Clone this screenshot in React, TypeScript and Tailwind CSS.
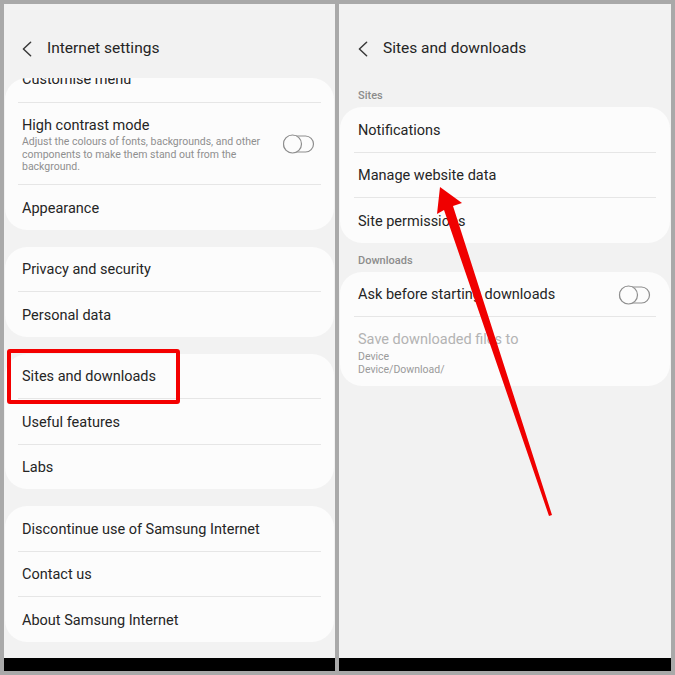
import React from "react";

const font = { fontFamily: "Roboto, 'Noto Sans', sans-serif" };

function Chevron() {
  return (
    <svg width="10" height="16" viewBox="0 0 10 16" className="shrink-0">
      <path d="M8.6 1.2 L1.4 8 L8.6 14.8" fill="none" stroke="#3a3a3a" strokeWidth="1.5" strokeLinecap="round" strokeLinejoin="round" />
    </svg>
  );
}

function Toggle() {
  return (
    <svg width="33" height="20" viewBox="0 0 33 20" className="shrink-0">
      <rect x="1.5" y="2" width="30" height="16" rx="8" fill="none" stroke="#8e8e8e" strokeWidth="1.2" />
      <circle cx="10.5" cy="10" r="9" fill="#fcfcfc" stroke="#8e8e8e" strokeWidth="1.2" />
    </svg>
  );
}

function Divider({ inset }: { inset: string }) {
  return <div className={`h-px bg-[#e6e6e6] ${inset}`} />;
}

function Row({ label, pl }: { label: string; pl: string }) {
  return (
    <div className={`h-[44.5px] pt-[3px] flex items-center ${pl} text-[14.5px] text-[#252525]`}>{label}</div>
  );
}

function Header({ title, pl }: { title: string; pl: string }) {
  return (
    <div className={`h-[74px] pt-[16px] flex items-center ${pl} gap-[15px]`}>
      <Chevron />
      <span className="text-[15.5px] text-[#252525]">{title}</span>
    </div>
  );
}

export default function App() {
  return (
    <div className="relative w-[675px] h-[675px] bg-[#a9a9a9] pt-[4px] px-[4px] flex gap-[4px]" style={font}>
      {/* Left panel */}
      <div className="w-[331px] h-[667px] bg-[#f2f2f2] flex flex-col">
        <Header title="Internet settings" pl="pl-[18px]" />
        <div className="flex flex-col gap-[17px] mx-[1px]">
          <div className="bg-[#fcfcfc] rounded-[22px] overflow-hidden">
            <div className="h-[24px] overflow-hidden">
              <div className="pl-[17px] mt-[-8px] leading-[20px] text-[14.5px] text-[#252525]">Customise menu</div>
            </div>
            <Divider inset="mx-[13px]" />
            <div className="h-[81px] flex items-center justify-between pl-[17px] pr-[19px]">
              <div className="flex flex-col mt-[4px]">
                <div className="text-[14.5px] text-[#252525] leading-[18px]">High contrast mode</div>
                <div className="text-[10.5px] text-[#8f8f8f] leading-[12.5px] w-[250px] mt-[1px]">
                  Adjust the colours of fonts, backgrounds, and other components to make them stand out from the background.
                </div>
              </div>
              <Toggle />
            </div>
            <Divider inset="mx-[13px]" />
            <Row label="Appearance" pl="pl-[17px]" />
          </div>
          <div className="bg-[#fcfcfc] rounded-[22px]">
            <Row label="Privacy and security" pl="pl-[17px]" />
            <Divider inset="mx-[13px]" />
            <Row label="Personal data" pl="pl-[17px]" />
          </div>
          <div className="bg-[#fcfcfc] rounded-[22px] relative">
            <Row label="Sites and downloads" pl="pl-[17px]" />
            <div className="absolute left-[2px] top-[-5px] w-[173px] h-[55px] border-[4px] border-[#f40000] rounded-[3px]" />
            <Divider inset="mx-[13px]" />
            <Row label="Useful features" pl="pl-[17px]" />
            <Divider inset="mx-[13px]" />
            <Row label="Labs" pl="pl-[17px]" />
          </div>
          <div className="bg-[#fcfcfc] rounded-[22px]">
            <Row label="Discontinue use of Samsung Internet" pl="pl-[17px]" />
            <Divider inset="mx-[13px]" />
            <Row label="Contact us" pl="pl-[17px]" />
            <Divider inset="mx-[13px]" />
            <Row label="About Samsung Internet" pl="pl-[17px]" />
          </div>
        </div>
        <div className="mt-auto h-[13px] bg-black" />
      </div>

      {/* Right panel */}
      <div className="w-[332px] h-[667px] bg-[#f2f2f2] flex flex-col">
        <Header title="Sites and downloads" pl="pl-[19px]" />
        <div className="flex flex-col mx-[1px]">
          <div className="h-[29px] pt-[7px] flex items-center pl-[18px] text-[11px] font-medium text-[#8c8c8c]">Sites</div>
          <div className="bg-[#fcfcfc] rounded-[22px]">
            <Row label="Notifications" pl="pl-[18px]" />
            <Divider inset="mx-[14px]" />
            <Row label="Manage website data" pl="pl-[18px]" />
            <Divider inset="mx-[14px]" />
            <Row label="Site permissions" pl="pl-[18px]" />
          </div>
          <div className="h-[29px] pt-[9px] flex items-center pl-[18px] text-[11px] font-medium text-[#8c8c8c]">Downloads</div>
          <div className="bg-[#fcfcfc] rounded-[22px]">
            <div className="h-[44.5px] pt-[3px] flex items-center justify-between pl-[18px] pr-[19px]">
              <span className="text-[14.5px] text-[#252525]">Ask before starting downloads</span>
              <Toggle />
            </div>
            <Divider inset="mx-[14px]" />
            <div className="h-[69px] pt-[4px] flex flex-col justify-center pl-[18px]">
              <div className="text-[14.5px] text-[#b3b3b3] leading-[18px]">Save downloaded files to</div>
              <div className="text-[10.5px] text-[#9a9a9a] leading-[12.5px] mt-[2px]">Device</div>
              <div className="text-[10.5px] text-[#9a9a9a] leading-[12.5px]">Device/Download/</div>
            </div>
          </div>
        </div>
        <div className="mt-auto h-[13px] bg-black" />
      </div>

      {/* Annotation arrow */}
      <svg className="absolute left-0 top-0 pointer-events-none" width="675" height="675" viewBox="0 0 675 675">
        <polygon points="440,187 462,203 453,206 552,515 549,516 444,210 437,214" fill="#f00000" />
      </svg>
    </div>
  );
}
